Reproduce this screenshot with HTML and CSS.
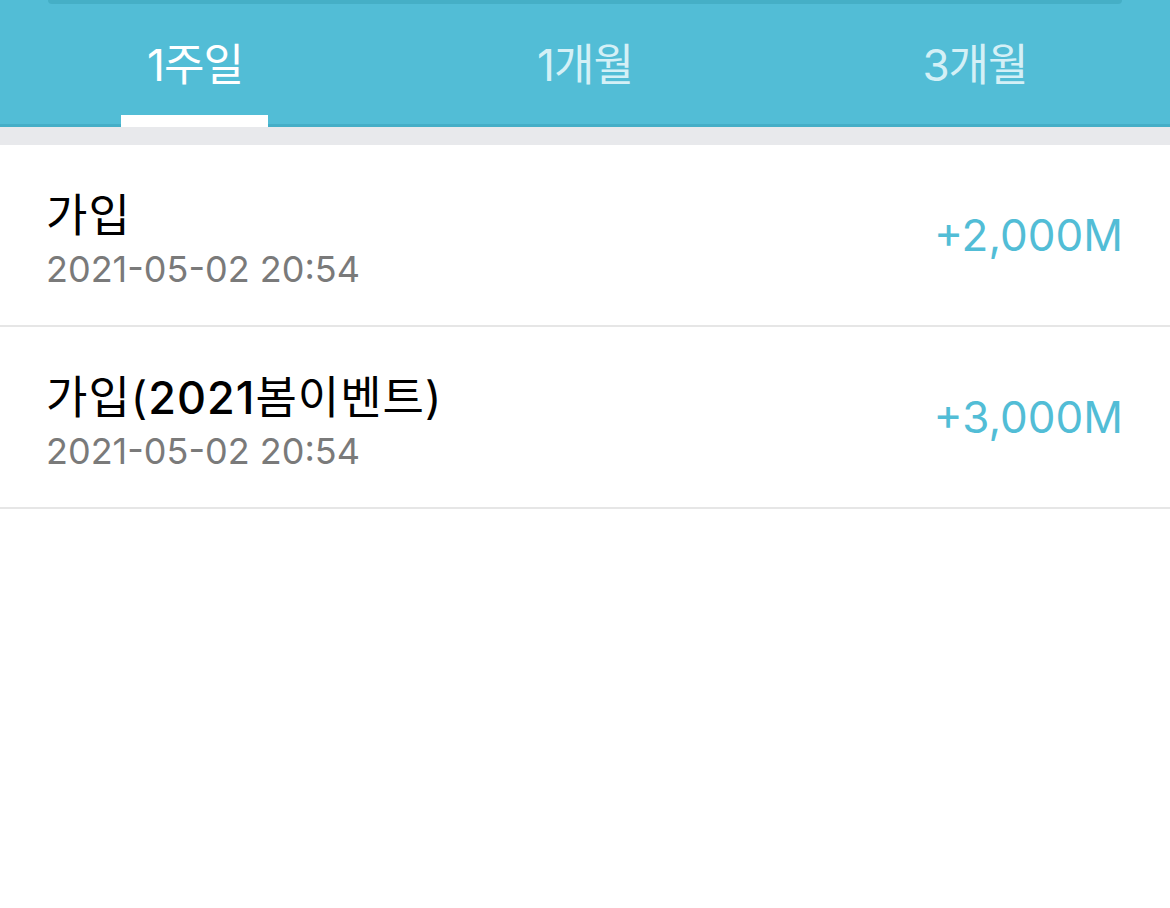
FILE: index.html
```html
<!DOCTYPE html>
<html lang="ko">
  <head>
    <meta charset="UTF-8" />
    <meta name="viewport" content="width=device-width, initial-scale=1.0" />
    <title>마일리지 내역</title>
    <link rel="stylesheet" href="styles.css">
  </head>
  <body>
    <header class="header">
      <div class="search-edge"></div>
      <nav class="tabs">
        <a class="tab active" href="#">1주일</a>
        <a class="tab" href="#">1개월</a>
        <a class="tab" href="#">3개월</a>
      </nav>
    </header>
    <div class="gap"></div>

    <ul class="history">
      <li class="row">
        <div class="info">
          <div class="title">가입</div>
          <div class="date">2021-05-02 20:54</div>
        </div>
        <div class="amount">+2,000M</div>
      </li>
      <li class="row">
        <div class="info">
          <div class="title">가입(<span class="num">2021</span>봄이벤트)</div>
          <div class="date">2021-05-02 20:54</div>
        </div>
        <div class="amount">+3,000M</div>
      </li>
    </ul>
  </body>
</html>
```

FILE: styles.css
```css
:root {
  font-family: Inter, "Noto Sans CJK KR", sans-serif;
}

*,
*::before,
*::after {
  box-sizing: border-box;
}

body {
  margin: 0;
  background: #fff;
}

.header {
  background-color: #52bdd6;
  border-bottom: 3px solid #45aec7;
  height: 127px;
}

.search-edge {
  height: 4px;
  margin: 0 48px;
  background-color: #45afc6;
  border-radius: 0 0 10px 10px;
}

.tabs {
  display: flex;
  height: 120px;
}

.tab {
  flex: 1;
  display: flex;
  justify-content: center;
  align-items: center;
  padding-bottom: 4px;
  position: relative;
  font-size: 44px;
  color: #d4f0f6;
  text-decoration: none;
  letter-spacing: -1px;
}

.tab.active {
  color: #fff;
}

/* indicator sits over the header's bottom border */
.tab.active::after {
  content: "";
  position: absolute;
  left: 121px;
  width: 147px;
  bottom: -3px;
  height: 12px;
  background: #fff;
}

.gap {
  height: 18px;
  background-color: #e8e9ec;
}

.history {
  list-style: none;
  margin: 0;
  padding: 0;
}

.row {
  display: flex;
  align-items: center;
  justify-content: space-between;
  height: 182px;
  padding: 6px 47px 0 46px;
  border-bottom: 2px solid #e6e6e6;
}

.title {
  font-size: 45px;
  color: #000;
  line-height: 62px;
  letter-spacing: 1px;
}

.title .num {
  font-weight: 500;
}

.date {
  font-size: 36px;
  color: #7a7a7a;
  line-height: 44px;
}

.amount {
  font-size: 44px;
  color: #52bdd6;
  margin-bottom: 6px;
}
```
